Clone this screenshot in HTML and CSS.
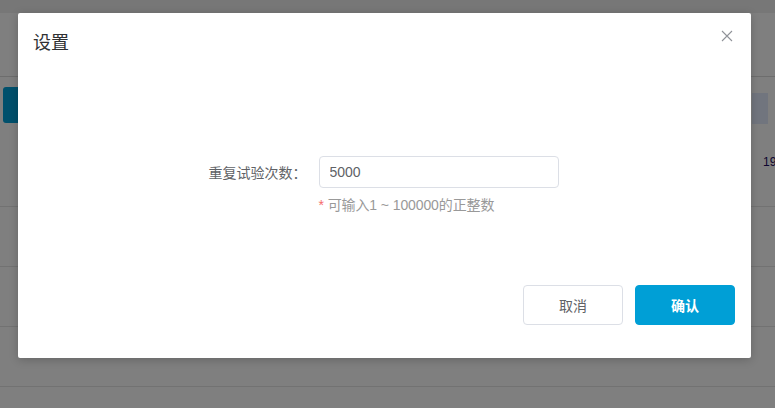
FILE: index.html
```html
<!DOCTYPE html>
<html lang="zh-CN">
<head>
<meta charset="utf-8">
<title>设置</title>
<link rel="stylesheet" href="styles.css">
</head>
<body>
<div class="page">
  <div class="topbar"></div>
  <div class="section"></div>
  <div class="toolbar">
    <button class="tool-btn">新增</button>
  </div>
  <div class="table">
    <div class="thead"></div>
    <div class="trow first"><span class="cell-num">19</span></div>
    <div class="trow"></div>
    <div class="trow"></div>
    <div class="trow"></div>
  </div>
</div>

<div class="mask"></div>
<div class="dialog">
  <div class="dialog-header">
    <span class="dialog-title">设置</span>
    <button class="dialog-close" aria-label="关闭">
      <svg width="12" height="12" viewBox="0 0 12 12"><path d="M1 1L11 11M11 1L1 11" stroke="#909399" stroke-width="1.1" fill="none"/></svg>
    </button>
  </div>
  <div class="dialog-body">
    <div class="form-row">
      <label class="form-label">重复试验次数：</label>
      <div class="form-control">
        <input class="input" type="text" value="5000">
        <div class="hint"><span class="star">*</span> 可输入1 ~ 100000的正整数</div>
      </div>
    </div>
  </div>
  <div class="dialog-footer">
    <button class="btn btn-default">取消</button>
    <button class="btn btn-primary">确认</button>
  </div>
</div>
</body>
</html>
```
FILE: styles.css
```css
* { box-sizing: border-box; }
html, body { margin: 0; padding: 0; }
body {
  width: 775px;
  height: 408px;
  overflow: hidden;
  font-family: "Liberation Sans", "Noto Sans CJK SC", sans-serif;
  background: #ffffff;
  position: relative;
}
.page { width: 100%; }
.topbar { height: 13px; background: #efefef; }
.section { height: 64px; border-bottom: 1px solid #dadada; }
.toolbar { padding: 10px 3px 0; height: 46px; }
.tool-btn {
  width: 60px; height: 36px; border: 0; border-radius: 3px;
  background: #00a0d8; color: #fff; font-size: 14px;
  font-family: inherit;
}
.table { margin-top: -30px; }
.thead { margin-left: 752px; width: 16px; height: 31px; background: #e3ebfc; }
.trow { height: 60px; border-bottom: 1px solid #e4e4e4; position: relative; }
.trow.first { height: 83px; }
.cell-num {
  display: block; padding: 31px 0 0 763px;
  font-size: 12px; color: #1a0a5e; line-height: 14px;
}

.mask {
  position: absolute; inset: 0;
  background: rgba(0, 0, 0, 0.5);
}
.dialog {
  position: absolute; top: 13px; left: 18px;
  width: 733px;
  background: #fff;
  border-radius: 2px;
  box-shadow: 0 2px 10px rgba(0, 0, 0, 0.2);
  display: flex; flex-direction: column;
}
.dialog-header {
  height: 56px;
  padding: 16px 16px;
  display: flex; align-items: center; justify-content: space-between;
}
.dialog-title {
  font-size: 18px; line-height: 24px; color: #303133;
  font-family: "Noto Sans CJK SC", sans-serif;
  margin-left: -1px;
}
.dialog-close {
  border: 0; background: none; padding: 0; margin: -10px 2px 0 0;
  width: 12px; height: 12px; display: flex;
}
.dialog-body { padding-top: 87px; }
.form-row {
  display: flex; justify-content: center; align-items: flex-start;
  padding-right: 2px;
}
.form-label {
  font-family: "Noto Sans CJK SC", sans-serif;
  font-size: 14px; line-height: 32px; color: #606266;
  padding-right: 12px;
}
.form-control { width: 240px; }
.input {
  display: block;
  width: 240px; height: 32px;
  border: 1px solid #dcdfe6; border-radius: 4px;
  padding: 0 10px;
  font-family: "Liberation Sans", "Noto Sans CJK SC", sans-serif;
  font-size: 14px; color: #606266;
  outline: none;
}
.hint {
  margin-top: 7px;
  font-size: 14px; line-height: 20px; color: #999999;
  font-family: "Liberation Sans", "Noto Sans CJK SC", sans-serif;
  letter-spacing: -0.1px;
}
.star { color: #f56c6c; }
.dialog-footer {
  display: flex; justify-content: flex-end; gap: 12px;
  padding: 70px 16px 33px;
}
.btn {
  width: 100px; height: 40px; border-radius: 4px;
  font-family: "Noto Sans CJK SC", sans-serif;
  font-size: 14px;
}
.btn-default { background: #fff; border: 1px solid #dcdfe6; color: #606266; }
.btn-primary { background: #009fd6; border: 1px solid #009fd6; color: #fff; font-weight: bold; }
```
